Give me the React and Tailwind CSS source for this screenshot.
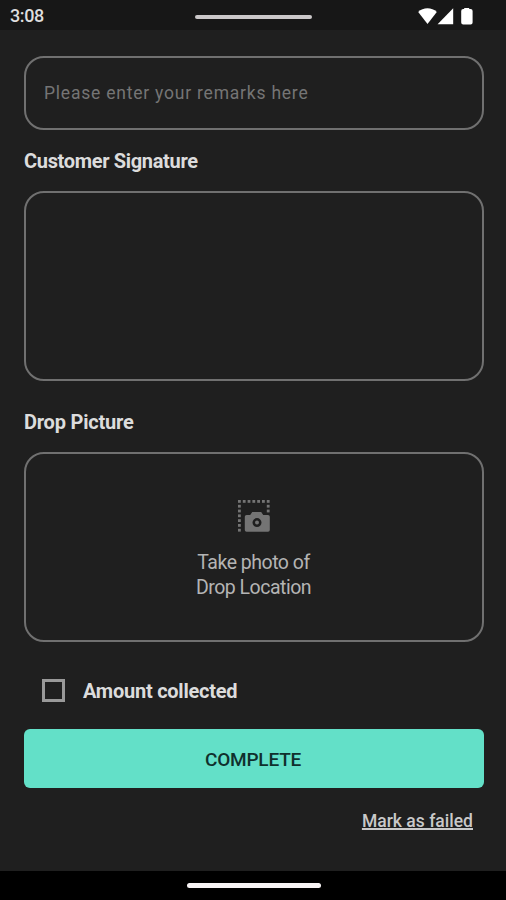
import { useState } from 'react';
import { clsx } from 'clsx';

function StatusIcons() {
  return (
    <svg width="56" height="18" viewBox="0 0 56 18" fill="#fff">
      {/* wifi */}
      <path d="M0.2 4C5.1 -0.9 13.8 -0.9 18.8 4L9.5 16Z" />
      {/* signal */}
      <path d="M19.6 16.3L35.2 0.2V16.3Z" />
      {/* battery */}
      <path d="M46.2 -0.6H51.2V0.9H52.6Q54.6 0.9 54.6 2.9V14.4Q54.6 16.4 52.6 16.4H45.2Q43.2 16.4 43.2 14.4V2.9Q43.2 0.9 45.2 0.9H46.2Z" />
    </svg>
  );
}

const DOTS = [0, 1, 2, 3, 4, 5, 6];

function PhotoIcon() {
  return (
    <svg width="32" height="32" viewBox="0 0 32 32" fill="#747474">
      {DOTS.map((i) => (
        <rect key={`t${i}`} x={i * 4.8} y="0" width="2.8" height="2.8" />
      ))}
      {DOTS.slice(1).map((i) => (
        <rect key={`l${i}`} x="0" y={i * 4.8} width="2.8" height="2.8" />
      ))}
      {DOTS.slice(1, 3).map((i) => (
        <rect key={`r${i}`} x="28.8" y={i * 4.8} width="2.8" height="2.8" />
      ))}
      <path
        fillRule="evenodd"
        d="M8.6 15H12.2L14.2 12H23.2L25.2 15H30Q31.8 15 31.8 16.8V30Q31.8 31.8 30 31.8H8.6Q6.8 31.8 6.8 30V16.8Q6.8 15 8.6 15ZM19 18.1A4.5 4.5 0 1 0 19 27.1A4.5 4.5 0 1 0 19 18.1Z"
      />
      <circle cx="19" cy="22.6" r="2" />
    </svg>
  );
}

export default function App() {
  const [collected, setCollected] = useState(false);
  const [remarks, setRemarks] = useState('');

  return (
    <div className="flex h-[900px] w-[506px] flex-col overflow-hidden bg-[#1f1f1f] font-['Roboto',sans-serif] text-[#dcdcdc]">
      <header className="grid h-[30px] shrink-0 grid-cols-3 items-center bg-[#171717]">
        <span className="pt-0.5 pl-2.5 text-[18px] leading-none font-medium tracking-[-0.4px] text-[#dedede]">3:08</span>
        <div className="mt-[3px] ml-0.5 h-1 w-[117px] justify-self-center rounded-full bg-[#cbc8c9]" />
        <div className="mt-1 mr-8 justify-self-end">
          <StatusIcons />
        </div>
      </header>

      <main className="flex flex-1 flex-col pt-[26px] pr-[22px] pl-6">
        <input
          className="h-[74px] w-full rounded-[20px] border-2 border-[#707070] bg-transparent px-[18px] text-[17.5px] tracking-[0.78px] text-[#dcdcdc] placeholder:text-[#757575] focus:outline-none"
          placeholder="Please enter your remarks here"
          value={remarks}
          onChange={(e) => setRemarks(e.target.value)}
        />

        <h2 className="mt-[18px] text-[20px] leading-[26px] font-bold tracking-[-0.33px]">Customer Signature</h2>
        <div className="mt-[17px] h-[190px] rounded-[20px] border-2 border-[#707070]" />

        <h2 className="mt-7 text-[20px] leading-[26px] font-bold tracking-[-0.2px]">Drop Picture</h2>
        <button className="mt-[17px] flex h-[190px] flex-col items-center rounded-[20px] border-2 border-[#707070] pt-[46px] pr-px">
          <PhotoIcon />
          <span className="mt-[18px] text-[19.5px] leading-[25px] tracking-[-0.5px] text-[#b4b4b4]">
            Take photo of
            <br />
            Drop Location
          </span>
        </button>

        <label className="mt-9 ml-[18px] flex h-6 items-center gap-[18px]">
          <input type="checkbox" className="sr-only" checked={collected} onChange={() => setCollected(!collected)} />
          <span className={clsx('size-[23px] border-[3px] border-[#999999]', collected && 'bg-[#63e0c8]')} />
          <span className="pt-0.5 text-[20px] font-bold tracking-[-0.25px]">Amount collected</span>
        </label>

        <button className="mt-[27px] h-[59px] shrink-0 rounded-md bg-[#63e0c8] pt-1 pr-0.5 text-[19px] font-medium tracking-[-0.2px] text-[#10302d]">
          COMPLETE
        </button>
        <button className="mt-[21px] mr-[11px] self-end text-[17.5px] leading-6 font-medium tracking-[0.01px] text-[#c9c9c9] underline decoration-2 underline-offset-1">
          Mark as failed
        </button>
      </main>

      <footer className="flex h-[29px] shrink-0 items-center justify-center bg-black">
        <div className="ml-px h-[5px] w-[134px] rounded-full bg-[#f8f4f5]" />
      </footer>
    </div>
  );
}
